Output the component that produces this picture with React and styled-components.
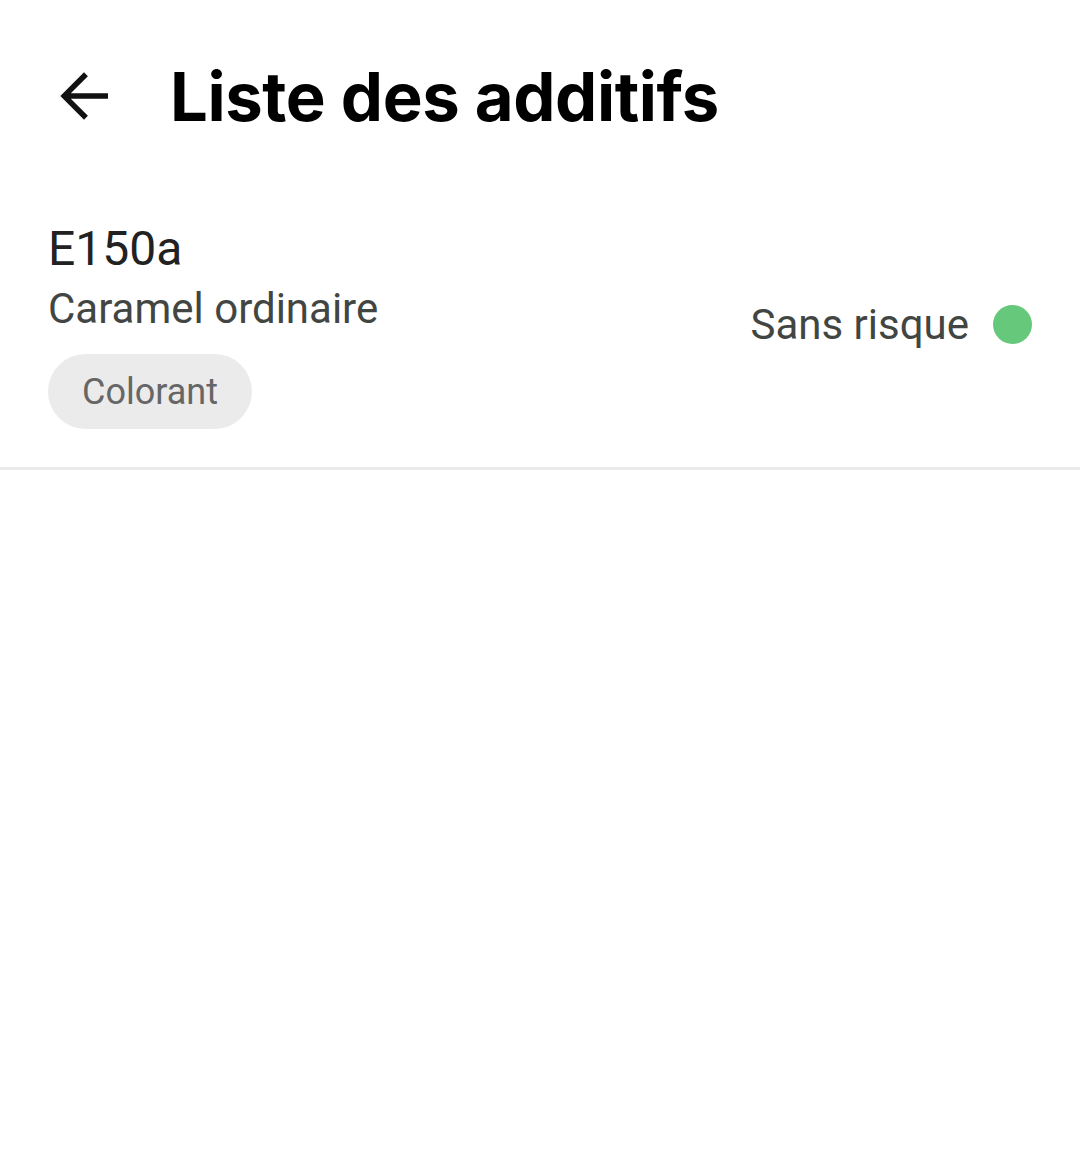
import styled, { createGlobalStyle } from 'styled-components';

const GlobalStyle = createGlobalStyle`
  html, body {
    margin: 0;
    padding: 0;
    background: #fff;
  }
  body {
    font-family: Roboto, "Liberation Sans", sans-serif;
  }
`;

const Page = styled.div`
  width: 1080px;
  min-height: 1158px;
  background: #fff;
`;

const Header = styled.header`
  display: flex;
  align-items: center;
  gap: 50px;
  padding: 60px 48px 0 48px;
  height: 72px;
`;

const BackButton = styled.button`
  width: 72px;
  height: 72px;
  padding: 0;
  border: none;
  background: none;
  display: flex;
  align-items: center;
  justify-content: center;
  color: #111;
`;

const Title = styled.h1`
  margin: 0;
  font-family: Inter, "Liberation Sans", sans-serif;
  font-weight: 700;
  font-size: 67px;
  letter-spacing: -0.4px;
  color: #000;
`;

const List = styled.ul`
  list-style: none;
  margin: 87px 0 0 0;
  padding: 0;
`;

const Row = styled.li`
  display: flex;
  align-items: center;
  justify-content: space-between;
  padding: 0 48px 38px 48px;
  border-bottom: 3px solid #ebebeb;
`;

const Info = styled.div`
  display: flex;
  flex-direction: column;
`;

const Code = styled.div`
  font-size: 48px;
  line-height: 60px;
  color: #222;
`;

const Name = styled.div`
  font-size: 42px;
  line-height: 60px;
  color: #424643;
`;

const Chip = styled.span`
  align-self: flex-start;
  margin-top: 15px;
  height: 75px;
  padding: 0 34px;
  border-radius: 38px;
  background: #ebebeb;
  color: #666;
  font-size: 36px;
  display: flex;
  align-items: center;
`;

const Risk = styled.div`
  display: flex;
  align-items: center;
  gap: 24px;
  font-size: 42px;
  color: #424643;
`;

const Dot = styled.span`
  width: 39px;
  height: 39px;
  border-radius: 50%;
  background: ${(p) => p.color};
`;

const additives = [
  { code: 'E150a', name: 'Caramel ordinaire', type: 'Colorant', risk: 'Sans risque', color: '#66c87a' },
];

const App = () => (
  <Page>
    <GlobalStyle />
    <Header>
      <BackButton aria-label="Retour">
        <svg width="72" height="72" viewBox="0 0 24 24" fill="currentColor">
          <path d="M20 11.1H7.6l5.7-5.7L12 4.1 4.1 12l7.9 7.9 1.3-1.3-5.7-5.7H20v-1.8z" />
        </svg>
      </BackButton>
      <Title>Liste des additifs</Title>
    </Header>
    <List>
      {additives.map((a) => (
        <Row key={a.code}>
          <Info>
            <Code>{a.code}</Code>
            <Name>{a.name}</Name>
            <Chip>{a.type}</Chip>
          </Info>
          <Risk>
            {a.risk}
            <Dot color={a.color} />
          </Risk>
        </Row>
      ))}
    </List>
  </Page>
);

export default App;
